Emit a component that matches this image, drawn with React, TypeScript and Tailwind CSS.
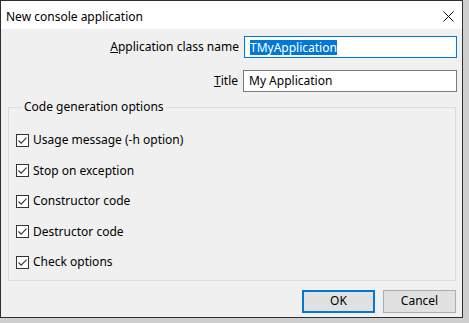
import React from 'react'

const font = { fontFamily: '"Noto Sans", "Open Sans", sans-serif' }

function Check({ label }: { label: string }) {
  return (
    <div className="flex h-[30.5px] items-center gap-[4px]">
      <span className="flex h-[13px] w-[13px] items-center justify-center border border-[#333333] bg-white">
        <svg width="11" height="11" viewBox="0 0 11 11" fill="none">
          <path d="M1.5 5.5 L4.2 8.2 L9.5 2.6" stroke="#333333" strokeWidth="1.1" />
        </svg>
      </span>
      <span>{label}</span>
    </div>
  )
}

export default function App() {
  return (
    <div className="h-[323px] w-[469px] bg-[#cfcfcf] text-[12px] leading-[16px] text-black" style={font}>
      <div className="flex h-[318px] w-[463px] flex-col border border-[#2e2e2e] bg-[#f0f0f0]">
        <div className="flex h-[28px] shrink-0 items-center justify-between bg-white pl-[5px] pr-[8px]">
          <span className="pt-[3px]">New console application</span>
          <svg width="11" height="11" viewBox="0 0 11 11" className="mt-[3px]">
            <path d="M0.5 0.5 L10.5 10.5 M10.5 0.5 L0.5 10.5" stroke="#111" strokeWidth="1" />
          </svg>
        </div>

        <div className="mt-[7px] flex items-center justify-end gap-[5px] pr-[5px]">
          <span>
            <u>A</u>pplication class name
          </span>
          <div className="flex h-[22px] w-[213px] items-center border border-[#0078d7] bg-white pl-[5px]">
            <span className="bg-[#0078d7] leading-[15px] text-white">TMyApplication</span>
          </div>
        </div>

        <div className="mt-[12px] flex items-center justify-end gap-[5px] pr-[5px]">
          <span>
            <u>T</u>itle
          </span>
          <div className="flex h-[22px] w-[214px] items-center border border-[#7a7a7a] bg-white pl-[5px]">
            <span>My Application</span>
          </div>
        </div>

        <fieldset className="mx-[7px] mr-[6px] mt-[7px] border border-[#dcdcdc] pb-[2px] pl-[7px] pt-[10px]">
          <legend className="ml-[6px] px-[2px]">Code generation options</legend>
          <Check label="Usage message (-h option)" />
          <Check label="Stop on exception" />
          <Check label="Constructor code" />
          <Check label="Destructor code" />
          <Check label="Check options" />
        </fieldset>

        <div className="mt-[9px] flex justify-end gap-[8px] pr-[6px]">
          <button className="h-[23px] w-[73px] border-2 border-[#0078d7] bg-[#e1e1e1]">OK</button>
          <button className="h-[23px] w-[73px] border border-[#adadad] bg-[#e1e1e1]">Cancel</button>
        </div>
      </div>
    </div>
  )
}
